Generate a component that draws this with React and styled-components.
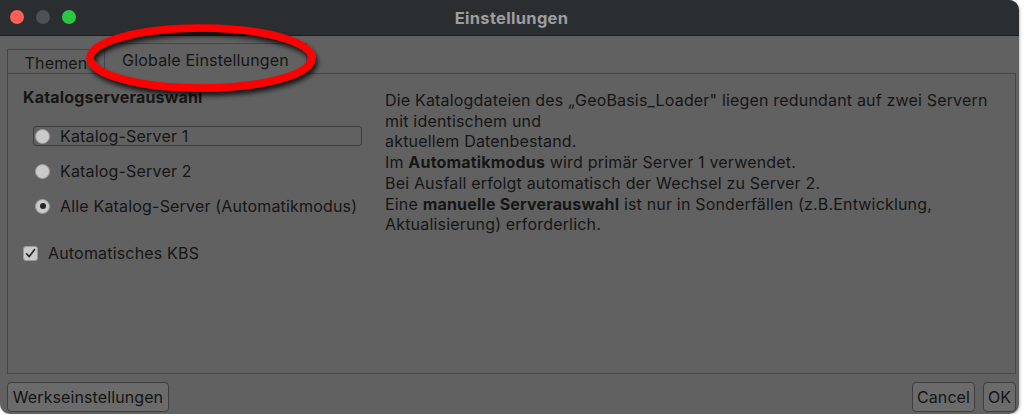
import React from "react";
import styled, { createGlobalStyle } from "styled-components";

const GlobalStyle = createGlobalStyle`
  html, body {
    margin: 0;
    padding: 0;
    background: #ffffff;
  }
  body {
    font-family: Inter, "Noto Sans", "Liberation Sans", sans-serif;
    letter-spacing: 0.18px;
  }
`;

const Window = styled.div`
  position: relative;
  width: 1019px;
  height: 414px;
  background: #616161;
  border-radius: 0 10px 10px 10px;
  overflow: hidden;
  display: flex;
  flex-direction: column;
  box-shadow: 1px 1px 3px rgba(0, 0, 0, 0.25);
`;

const TitleBar = styled.div`
  position: relative;
  height: 35px;
  flex: none;
  background: #2b2e31;
  border-bottom: 1px solid #1d1f21;
  display: flex;
  align-items: center;
  justify-content: center;
`;

const Lights = styled.div`
  position: absolute;
  left: 10px;
  top: 10px;
  display: flex;
  gap: 12px;
`;

const Light = styled.span`
  width: 14px;
  height: 14px;
  border-radius: 50%;
  background: ${(p) => p.color};
`;

const Title = styled.div`
  color: #9c9ea0;
  font-weight: 700;
  font-size: 16.5px;
  letter-spacing: 0.3px;
  padding-left: 4px;
`;

const Body = styled.div`
  flex: 1;
  display: flex;
  flex-direction: column;
  padding: 7px 3px 2px 7px;
`;

const TabBar = styled.div`
  display: flex;
  align-items: flex-end;
  height: 31px;
  flex: none;
`;

const Tab = styled.div`
  height: ${(p) => (p.active ? "31px" : "25px")};
  box-sizing: border-box;
  border: 1px solid #474747;
  border-bottom: ${(p) => (p.active ? "none" : "1px solid #474747")};
  border-left: ${(p) => (p.active ? "none" : "1px solid #474747")};
  display: flex;
  align-items: center;
  justify-content: center;
  font-size: 16px;
  color: #161616;
  padding-top: 2px;
  width: ${(p) => p.w}px;
`;

const TabFill = styled.div`
  flex: 1;
  border-bottom: 1px solid #474747;
`;

const Pane = styled.div`
  flex: 1;
  border: 1px solid #474747;
  border-top: none;
  display: flex;
  padding: 13px 16px 0 15px;
  color: #161616;
  font-size: 16px;
`;

const LeftCol = styled.div`
  width: 346px;
  flex: none;
  display: flex;
  flex-direction: column;
`;

const GroupTitle = styled.div`
  font-weight: 700;
  height: 20px;
  line-height: 20px;
  margin-bottom: 19px;
`;

const RadioRow = styled.div`
  display: flex;
  align-items: center;
  gap: 10px;
  height: 20px;
  margin-left: 10px;
  width: 329px;
  padding-left: 1px;
  box-sizing: border-box;
  border: 1px solid ${(p) => (p.focus ? "#3e3e3e" : "transparent")};
  border-radius: 3px;
  margin-bottom: 15px;
  white-space: nowrap;
`;

const RadioDot = styled.span`
  width: 15px;
  height: 15px;
  flex: none;
  border-radius: 50%;
  box-sizing: border-box;
  background: #c9c9c9;
  border: 1px solid #9a9a9a;
  display: flex;
  align-items: center;
  justify-content: center;
  &::after {
    content: "";
    width: 6px;
    height: 6px;
    border-radius: 50%;
    background: ${(p) => (p.checked ? "#262626" : "transparent")};
  }
`;

const CheckRow = styled.div`
  display: flex;
  align-items: center;
  gap: 10px;
  margin-top: 12px;
  height: 20px;
`;

const CheckBox = styled.span`
  width: 15px;
  height: 15px;
  box-sizing: border-box;
  border-radius: 3px;
  background: #c9c9c9;
  border: 1px solid #9a9a9a;
  display: flex;
  align-items: center;
  justify-content: center;
`;

const InfoText = styled.div`
  margin-left: 16px;
  margin-top: 3px;
  line-height: 20.7px;
  white-space: nowrap;
  b {
    font-weight: 700;
  }
`;

const Footer = styled.div`
  height: 38px;
  flex: none;
  display: flex;
  align-items: flex-end;
  gap: 8px;
`;

const Spacer = styled.div`
  flex: 1;
`;

const Button = styled.button`
  height: 30px;
  width: ${(p) => p.w}px;
  padding: 0;
  background: #6b6b6b;
  border: 1px solid #3f3f3f;
  border-radius: 4px;
  color: #141414;
  font-family: inherit;
  font-size: 16px;
  letter-spacing: 0.1px;
`;

const Marker = styled.svg`
  position: absolute;
  left: 80px;
  top: 16px;
  overflow: visible;
  pointer-events: none;
`;

const lines = [
  <>Die Katalogdateien des „GeoBasis_Loader" liegen redundant auf zwei Servern</>,
  <>mit identischem und</>,
  <>aktuellem Datenbestand.</>,
  <>
    Im <b>Automatikmodus</b> wird primär Server 1 verwendet.
  </>,
  <>Bei Ausfall erfolgt automatisch der Wechsel zu Server 2.</>,
  <>
    Eine <b>manuelle Serverauswahl</b> ist nur in Sonderfällen (z.B.Entwicklung,
  </>,
  <>Aktualisierung) erforderlich.</>,
];

const radios = [
  { label: "Katalog-Server 1", focus: true },
  { label: "Katalog-Server 2" },
  { label: "Alle Katalog-Server (Automatikmodus)", checked: true },
];

export default function App() {
  return (
    <>
      <GlobalStyle />
      <Window>
        <TitleBar>
          <Lights>
            <Light color="#fe5f57" />
            <Light color="#4e5155" />
            <Light color="#29c840" />
          </Lights>
          <Title>Einstellungen</Title>
        </TitleBar>
        <Body>
          <TabBar>
            <Tab w={98}>Themen</Tab>
            <Tab active w={202}>Globale Einstellungen</Tab>
            <TabFill />
          </TabBar>
          <Pane>
            <LeftCol>
              <GroupTitle>Katalogserverauswahl</GroupTitle>
              {radios.map((r) => (
                <RadioRow key={r.label} focus={r.focus}>
                  <RadioDot checked={r.checked} />
                  {r.label}
                </RadioRow>
              ))}
              <CheckRow>
                <CheckBox>
                  <svg width="11" height="11" viewBox="0 0 11 11">
                    <path d="M1.5 5.8 L4.2 8.6 L9.6 1.6" fill="none" stroke="#222" strokeWidth="1.6" strokeLinecap="round" strokeLinejoin="round" />
                  </svg>
                </CheckBox>
                Automatisches KBS
              </CheckRow>
            </LeftCol>
            <InfoText>
              {lines.map((l, i) => (
                <div key={i}>{l}</div>
              ))}
            </InfoText>
          </Pane>
          <Footer>
            <Button w={162}>Werkseinstellungen</Button>
            <Spacer />
            <Button w={63}>Cancel</Button>
            <Button w={33}>OK</Button>
          </Footer>
        </Body>
        <Marker width="240" height="80">
          <defs>
            <filter id="sh" x="-20%" y="-40%" width="140%" height="180%">
              <feGaussianBlur in="SourceAlpha" stdDeviation="2.5" />
              <feOffset dx="2" dy="4" result="b" />
              <feComponentTransfer>
                <feFuncA type="linear" slope="0.8" />
              </feComponentTransfer>
              <feMerge>
                <feMergeNode />
                <feMergeNode in="SourceGraphic" />
              </feMerge>
            </filter>
          </defs>
          <ellipse cx="121" cy="42" rx="111" ry="30" fill="none" stroke="#ff0000" strokeWidth="7.5" filter="url(#sh)" />
        </Marker>
      </Window>
    </>
  );
}
